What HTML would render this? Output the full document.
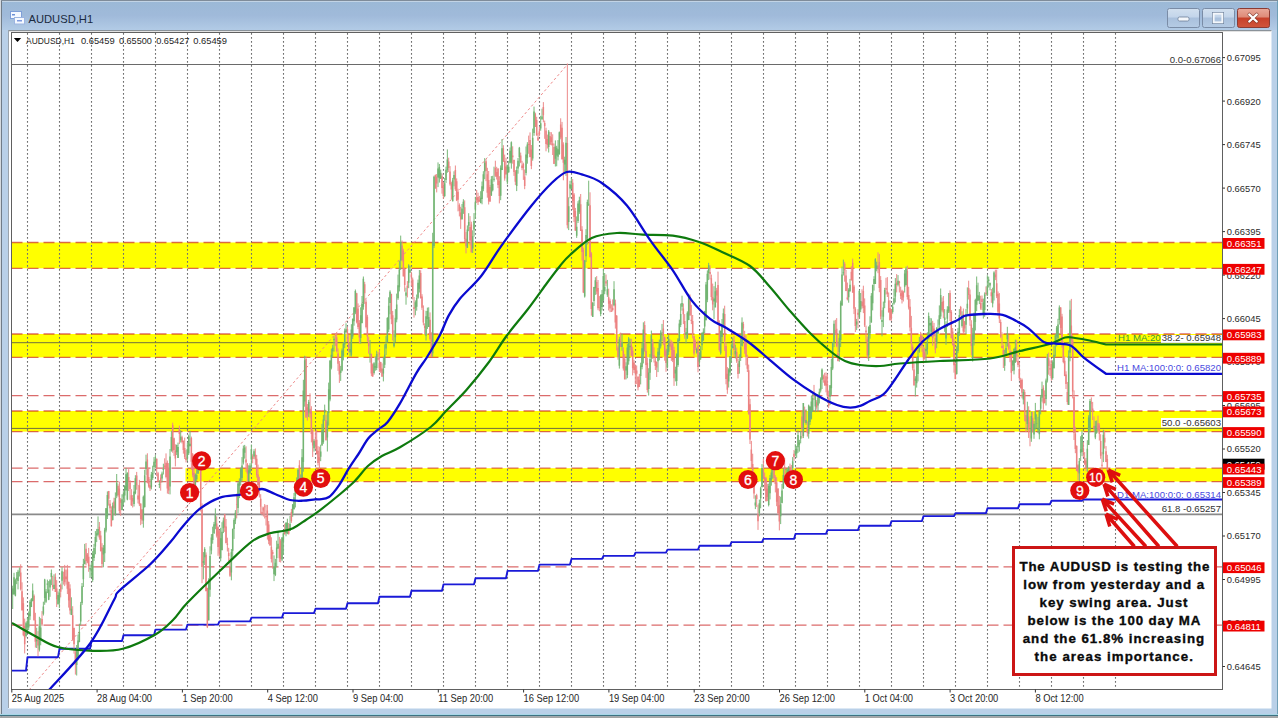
<!DOCTYPE html>
<html><head><meta charset="utf-8"><style>
html,body{margin:0;padding:0;width:1278px;height:718px;overflow:hidden;background:#bcd2ea;}
svg{display:block;font-family:"Liberation Sans", sans-serif;}
</style></head><body>
<svg width="1278" height="718" viewBox="0 0 1278 718">
<defs>
<linearGradient id="tb" x1="0" y1="0" x2="0" y2="1">
<stop offset="0" stop-color="#9bb9d6"/><stop offset="0.5" stop-color="#a0bada"/><stop offset="1" stop-color="#b2cbe6"/>
</linearGradient>
<linearGradient id="btn" x1="0" y1="0" x2="0" y2="1">
<stop offset="0" stop-color="#d2e0ef"/><stop offset="0.45" stop-color="#c3d5ea"/><stop offset="0.5" stop-color="#a9c0dc"/><stop offset="1" stop-color="#b5cbe4"/>
</linearGradient>
<linearGradient id="cls" x1="0" y1="0" x2="0" y2="1">
<stop offset="0" stop-color="#e9a99a"/><stop offset="0.45" stop-color="#de8a78"/><stop offset="0.5" stop-color="#c7402a"/><stop offset="1" stop-color="#d0553c"/>
</linearGradient>
<clipPath id="chart"><rect x="12.0" y="33.0" width="1210.0" height="656.0"/></clipPath>
</defs>

<rect x="0" y="0" width="1278" height="718" fill="#b9d0e8"/>
<rect x="0" y="1" width="1278" height="29" fill="url(#tb)"/>
<rect x="0" y="0" width="1278" height="1" fill="#7f8c99"/>
<rect x="0" y="1" width="1278" height="1" fill="#c2d4e5"/>
<rect x="0" y="0" width="1" height="718" fill="#d5dadf"/>
<rect x="1" y="1" width="1" height="716" fill="#707c88"/>
<rect x="1277" y="1" width="1" height="716" fill="#6f9fb6"/>
<rect x="0" y="714" width="1278" height="1" fill="#a6d6e6"/>
<rect x="0" y="715" width="1278" height="1.2" fill="#3d7282"/>
<rect x="0" y="716.2" width="1278" height="1.8" fill="#a3a3a3"/>
<text x="28.5" y="23" font-size="11.2" fill="#1b2a40">AUDUSD,H1</text>
<rect x="10.5" y="11.5" width="11" height="7" fill="#f4f8ff" stroke="#7f9fd8" stroke-width="1"/>
<rect x="14.5" y="17.5" width="10" height="6.5" fill="#f6f9ff" stroke="#9db5e0" stroke-width="1"/>
<rect x="12" y="14" width="3" height="1.5" fill="#6b8fd6"/><rect x="17" y="20" width="5" height="1.5" fill="#7f9be0"/>
<rect x="1167.5" y="8.5" width="32" height="19" rx="2" fill="url(#btn)" stroke="#7a8ca6" stroke-width="1"/>
<rect x="1178" y="17" width="11" height="4" rx="1.5" fill="#f4f7fb" stroke="#6d7f98" stroke-width="0.8"/>
<rect x="1202.5" y="8.5" width="32" height="19" rx="2" fill="url(#btn)" stroke="#7a8ca6" stroke-width="1"/>
<rect x="1213.5" y="13.5" width="9" height="9" fill="none" stroke="#f4f7fb" stroke-width="2.2"/>
<rect x="1212.3" y="12.3" width="11.4" height="11.4" fill="none" stroke="#6d7f98" stroke-width="0.6"/>
<rect x="1237.5" y="8.5" width="32" height="19" rx="2" fill="url(#cls)" stroke="#8a3b34" stroke-width="1"/>
<path d="M1249.3,14.5 L1256.7,21.5 M1256.7,14.5 L1249.3,21.5" stroke="#6a2a20" stroke-width="3.6" stroke-linecap="round" stroke-opacity="0.7"/>
<path d="M1249.3,14.5 L1256.7,21.5 M1256.7,14.5 L1249.3,21.5" stroke="#ffffff" stroke-width="2.4" stroke-linecap="round"/>
<rect x="8" y="30" width="1263.5" height="678.5" fill="#ffffff"/>
<rect x="8" y="30" width="1263.5" height="1" fill="#8a9299"/>
<rect x="8" y="31" width="1263.5" height="1" fill="#e2e2e2"/>
<rect x="8" y="30" width="1" height="678" fill="#9aa3ac"/>
<g clip-path="url(#chart)">
<rect x="12" y="242.5" width="1210.5" height="25.8" fill="#ffff00"/>
<rect x="12" y="334.0" width="1210.5" height="23.4" fill="#ffff00"/>
<rect x="12" y="411.0" width="1210.5" height="20.6" fill="#ffff00"/>
<rect x="185.5" y="468.2" width="1037.0" height="13.4" fill="#ffff00"/>
<rect x="1161" y="335.0" width="61" height="8" fill="#ffffff"/>
<rect x="1161" y="418.0" width="61" height="9.5" fill="#ffffff"/>
<path d="M27.5,33V689.5 M59.5,33V689.5 M91.5,33V689.5 M123.5,33V689.5 M155.5,33V689.5 M187.5,33V689.5 M219.5,33V689.5 M251.5,33V689.5 M283.5,33V689.5 M315.5,33V689.5 M347.5,33V689.5 M379.5,33V689.5 M411.5,33V689.5 M443.5,33V689.5 M475.5,33V689.5 M507.5,33V689.5 M539.5,33V689.5 M571.5,33V689.5 M603.5,33V689.5 M635.5,33V689.5 M667.5,33V689.5 M699.5,33V689.5 M731.5,33V689.5 M763.5,33V689.5 M795.5,33V689.5 M827.5,33V689.5 M859.5,33V689.5 M891.5,33V689.5 M923.5,33V689.5 M955.5,33V689.5 M987.5,33V689.5 M1019.5,33V689.5 M1051.5,33V689.5 M1083.5,33V689.5 M1115.5,33V689.5" stroke="#707070" stroke-width="1.1" stroke-dasharray="1.7 2.3"/>
<line x1="11.5" y1="64.5" x2="1222.5" y2="64.5" stroke="#6a6a6a" stroke-width="1"/>
<line x1="11.5" y1="342.7" x2="1222.5" y2="342.7" stroke="#6f6f40" stroke-width="1"/>
<line x1="11.5" y1="428.4" x2="1222.5" y2="428.4" stroke="#6f6f40" stroke-width="1"/>
<line x1="11.5" y1="514.4" x2="1222.5" y2="514.4" stroke="#8a8a8a" stroke-width="1.6"/>
<path d="M11.5,242.5H1222.5 M11.5,268.4H1222.5 M11.5,334.0H1222.5 M11.5,357.3H1222.5 M11.5,395.6H1222.5 M11.5,411.0H1222.5 M11.5,431.6H1222.5 M11.5,468.2H1222.5 M11.5,481.6H1222.5 M11.5,566.8H1222.5 M11.5,625.2H1222.5" stroke="#c81c1c" stroke-opacity="0.65" stroke-width="1.3" stroke-dasharray="11 5"/>
<line x1="29" y1="690" x2="567.4" y2="64.5" stroke="#ee8888" stroke-width="1" stroke-dasharray="2.5 2.5"/>
<polyline points="12.0,670.6 26.0,670.6 27.5,657.2 58.0,657.2 59.5,648.8 90.0,648.8 91.5,641.0 122.0,641.0 123.5,635.3 154.0,635.3 155.5,629.6 186.0,629.6 187.5,624.6 218.0,624.6 219.5,621.4 250.0,621.4 251.5,617.6 282.0,617.6 283.5,613.1 314.0,613.1 315.5,608.8 346.0,608.8 347.5,603.3 378.0,603.3 379.5,596.8 410.0,596.8 411.5,590.8 442.0,590.8 443.5,584.4 474.0,584.4 475.5,578.2 506.0,578.2 507.5,570.9 538.0,570.9 539.5,564.6 570.0,564.6 571.5,558.9 602.0,558.9 603.5,555.9 634.0,555.9 635.5,552.6 666.0,552.6 667.5,549.6 698.0,549.6 699.5,545.8 730.0,545.8 731.5,542.1 762.0,542.1 763.5,538.9 794.0,538.9 795.5,533.9 826.0,533.9 827.5,530.1 858.0,530.1 859.5,525.8 890.0,525.8 891.5,521.1 922.0,521.1 923.5,516.1 954.0,516.1 955.5,513.1 986.0,513.1 987.5,508.3 1018.0,508.3 1019.5,504.2 1050.0,504.2 1051.5,500.7 1082.0,500.7 1083.5,499.5 1222.0,499.5" fill="none" stroke="#1a1ad8" stroke-width="1.9" stroke-linejoin="round"/>
<path d="M20.70,564.3V590.5 M22.03,582.3V610.7 M23.37,597.4V636.3 M24.70,618.6V653.4 M34.03,594.4V620.0 M35.37,612.8V647.6 M38.03,631.2V656.2 M42.03,611.1V626.1 M52.70,575.8V590.7 M55.37,573.4V592.0 M56.70,580.1V607.0 M60.70,583.6V597.4 M63.37,571.7V584.6 M64.70,564.9V586.1 M66.03,570.1V584.6 M67.37,564.9V594.1 M68.70,581.5V607.6 M70.03,584.3V614.4 M72.70,606.2V640.8 M74.03,627.6V653.6 M75.37,649.0V674.6 M86.03,543.0V565.4 M87.36,553.0V563.3 M88.70,547.9V571.8 M99.36,522.0V539.8 M100.70,530.8V551.3 M102.03,543.2V567.3 M108.70,490.9V505.6 M110.03,500.0V512.6 M111.36,506.4V526.5 M114.03,497.7V515.5 M118.03,484.3V496.8 M119.36,481.6V513.7 M120.70,498.1V515.8 M128.70,469.2V491.0 M130.03,480.2V499.8 M131.36,489.1V506.0 M132.70,495.1V507.5 M136.70,471.9V489.7 M138.03,484.9V503.4 M139.36,479.9V506.1 M140.70,503.5V525.2 M142.03,509.1V524.0 M147.36,453.3V483.4 M148.70,468.4V487.7 M150.03,479.0V491.0 M156.70,458.5V476.2 M158.03,471.8V482.0 M160.70,474.4V490.7 M164.70,458.3V469.2 M166.03,453.4V478.4 M167.36,460.5V493.6 M168.70,463.1V494.1 M172.70,422.7V452.8 M174.03,437.6V455.9 M175.36,444.3V466.4 M179.36,425.6V444.1 M182.03,435.7V443.4 M183.36,440.6V453.7 M184.70,437.6V459.0 M186.03,450.1V462.4 M191.36,436.6V470.0 M192.70,453.0V477.3 M194.03,463.7V489.5 M200.70,460.7V511.5 M202.03,503.3V583.2 M206.03,552.4V591.5 M207.36,587.7V628.1 M216.69,516.4V537.5 M218.03,526.3V555.8 M219.36,529.7V557.1 M224.69,513.8V531.9 M226.03,519.0V543.5 M227.36,537.7V551.5 M228.69,547.8V561.0 M230.03,558.3V576.9 M236.69,493.6V518.4 M246.03,446.3V471.9 M247.36,463.0V484.7 M252.69,454.3V463.3 M255.36,448.5V464.9 M256.69,454.9V477.6 M258.03,464.6V491.6 M259.36,476.8V497.5 M260.69,494.2V514.0 M262.03,506.6V515.4 M263.36,506.8V516.5 M264.69,504.1V518.5 M266.03,504.9V525.5 M267.36,504.9V539.6 M268.69,521.0V544.2 M270.03,531.7V546.1 M271.36,537.3V562.5 M272.69,549.8V568.7 M279.36,536.9V562.1 M280.69,538.9V562.5 M284.69,523.7V534.0 M288.69,523.0V534.6 M291.36,508.9V522.9 M299.36,460.2V482.7 M306.03,356.1V417.3 M307.36,404.0V420.6 M310.03,393.3V418.3 M311.36,406.2V442.4 M312.69,429.4V457.0 M315.36,431.2V449.5 M316.69,430.1V454.6 M318.03,446.2V465.5 M319.36,446.7V469.1 M326.03,414.8V440.5 M335.36,333.8V346.1 M336.69,334.0V352.3 M338.03,348.4V370.9 M339.36,361.0V382.9 M347.36,326.8V342.0 M348.69,334.6V352.6 M356.69,292.8V323.4 M358.02,303.4V329.1 M359.36,320.1V343.6 M364.69,281.8V303.9 M366.02,299.3V328.4 M367.36,314.8V341.7 M368.69,336.6V353.7 M371.36,353.5V376.2 M372.69,363.4V376.8 M378.02,352.0V360.7 M379.36,349.3V372.0 M380.69,361.8V372.9 M382.02,363.4V377.0 M391.36,293.7V324.2 M392.69,310.9V340.6 M402.02,240.5V261.3 M403.36,248.7V276.2 M404.69,268.5V291.6 M407.36,281.1V297.4 M411.36,271.8V286.1 M412.69,277.5V299.4 M414.02,297.0V317.6 M420.69,270.2V298.7 M422.02,294.2V309.9 M423.36,305.4V325.4 M424.69,323.3V335.1 M430.02,312.4V340.6 M431.36,332.2V357.1 M435.36,174.5V188.6 M436.69,174.0V192.4 M442.02,173.5V193.7 M443.36,182.0V198.8 M448.69,157.7V172.0 M450.02,166.1V185.7 M451.36,181.7V199.1 M455.36,165.5V190.9 M456.69,178.4V201.1 M458.02,188.7V211.4 M459.36,203.4V216.4 M460.69,206.8V228.9 M464.69,200.4V241.9 M466.02,232.1V253.4 M470.02,216.1V245.3 M471.36,221.7V252.7 M476.69,190.0V203.1 M478.02,192.7V205.0 M479.35,195.9V202.0 M486.02,159.2V181.2 M487.35,167.8V197.7 M488.69,171.0V204.5 M490.02,185.0V201.3 M495.35,160.7V176.9 M496.69,166.8V179.5 M498.02,168.0V188.1 M499.35,176.2V203.4 M503.35,145.2V161.7 M504.69,154.6V180.7 M506.02,157.8V174.2 M512.69,146.3V163.7 M514.02,159.6V175.9 M515.35,170.1V185.1 M520.69,152.6V163.2 M522.02,160.8V170.2 M523.35,162.7V179.9 M524.69,169.5V189.2 M528.69,135.6V153.8 M530.02,132.4V157.4 M531.35,145.0V169.2 M535.35,112.7V126.7 M536.69,116.8V135.5 M538.02,133.4V140.9 M539.35,126.9V136.3 M543.35,102.1V122.3 M544.69,120.6V138.8 M546.02,127.7V151.3 M547.35,134.6V148.5 M550.02,132.0V145.0 M551.35,132.2V145.4 M552.69,134.3V155.0 M554.02,143.5V163.6 M560.69,118.3V139.3 M562.02,121.9V159.8 M563.35,142.3V180.3 M567.35,63.5V228.4 M572.69,179.1V209.9 M574.02,193.0V222.0 M575.35,207.9V230.6 M580.69,194.0V231.0 M582.02,226.2V260.6 M583.35,247.7V293.1 M590.02,192.3V257.6 M591.35,252.1V315.7 M596.69,276.1V294.4 M598.02,280.0V310.2 M599.35,296.1V311.3 M606.02,274.5V286.3 M608.69,288.7V310.5 M610.02,298.7V312.2 M611.35,304.3V311.7 M612.69,299.4V311.4 M615.35,299.6V328.6 M616.68,315.0V350.5 M618.02,345.4V359.7 M620.68,332.6V346.7 M623.35,347.3V370.6 M624.68,354.1V379.0 M631.35,338.8V356.1 M632.68,346.8V375.4 M634.02,359.8V373.0 M635.35,364.5V384.6 M636.68,365.5V384.1 M638.02,376.4V390.4 M639.35,373.9V387.0 M644.68,321.2V351.5 M646.02,343.4V377.9 M647.35,357.6V392.6 M652.68,339.0V358.9 M654.02,347.3V362.5 M655.35,356.6V370.0 M656.68,361.4V377.0 M663.35,320.0V345.0 M664.68,336.6V360.7 M666.02,348.5V371.8 M670.02,339.4V347.1 M671.35,340.4V360.9 M672.68,341.7V362.1 M674.02,346.8V385.9 M683.35,303.5V324.1 M684.68,314.1V338.8 M690.02,294.5V315.5 M691.35,304.8V324.1 M692.68,315.0V338.4 M694.02,335.5V355.6 M695.35,339.4V350.1 M698.02,340.5V372.3 M710.02,265.3V279.3 M711.35,274.6V300.4 M712.68,283.6V310.3 M716.68,287.9V302.6 M718.02,271.6V324.6 M719.35,320.3V351.6 M724.68,305.7V351.0 M726.02,342.4V384.3 M727.35,367.1V393.8 M734.02,335.8V356.3 M736.68,347.6V362.9 M738.02,358.8V378.5 M743.35,321.8V340.2 M744.68,330.8V353.8 M746.01,335.1V365.3 M747.35,354.8V372.0 M748.68,364.6V414.2 M750.01,398.8V444.0 M751.35,440.9V468.1 M752.68,453.7V487.1 M754.01,474.8V498.7 M756.68,493.8V507.1 M758.01,504.7V529.9 M763.35,459.0V479.1 M764.68,472.5V490.6 M766.01,476.8V501.3 M767.35,483.7V501.1 M774.01,456.1V481.0 M775.35,475.2V492.4 M776.68,477.2V506.2 M778.01,488.0V514.9 M779.35,495.9V530.4 M784.68,457.9V476.5 M790.01,463.6V482.9 M791.35,465.0V474.7 M794.01,450.0V460.9 M802.01,410.0V438.2 M804.68,406.6V422.9 M807.35,421.4V436.6 M814.01,384.9V400.0 M816.68,400.1V409.7 M823.35,374.6V382.7 M824.68,372.8V385.9 M826.01,372.4V392.3 M827.35,373.9V397.0 M828.68,390.6V408.1 M835.35,319.8V334.9 M836.68,318.1V347.2 M838.01,341.7V361.4 M844.68,261.8V281.7 M846.01,269.9V291.2 M847.35,282.6V300.4 M851.35,266.2V280.2 M852.68,258.6V292.4 M854.01,284.9V314.1 M855.35,307.2V332.0 M858.01,309.2V328.2 M862.01,289.3V308.6 M863.35,285.7V313.1 M864.68,298.4V327.0 M866.01,325.6V341.7 M867.35,336.5V358.5 M878.01,252.3V273.2 M879.35,253.9V292.2 M880.68,276.1V319.4 M886.01,277.8V294.6 M887.34,277.1V297.0 M888.68,292.5V312.2 M890.01,300.3V320.6 M891.34,309.0V320.8 M896.68,274.1V292.4 M899.34,280.8V292.5 M900.68,286.7V299.1 M902.01,289.7V303.5 M903.34,290.8V301.5 M907.34,265.7V299.6 M908.68,286.8V309.5 M910.01,299.1V331.3 M911.34,315.9V350.2 M912.68,344.2V370.4 M914.01,363.7V386.0 M920.68,331.9V348.1 M922.01,333.0V351.8 M923.34,346.7V363.5 M924.68,347.6V359.6 M932.68,320.8V345.8 M934.01,322.9V336.4 M935.34,331.9V353.3 M942.01,297.5V311.6 M943.34,296.0V318.3 M950.01,290.3V321.0 M951.34,310.1V338.6 M952.68,328.0V345.5 M954.01,338.8V372.7 M955.34,363.4V379.3 M960.68,305.9V315.8 M963.34,308.5V334.0 M964.68,320.9V332.5 M968.68,280.7V299.5 M970.01,289.5V325.8 M971.34,320.2V355.4 M980.68,295.7V309.8 M982.01,295.5V310.0 M986.01,286.4V295.8 M991.34,289.0V302.8 M995.34,269.7V280.1 M996.68,269.7V298.1 M998.01,291.4V315.8 M999.34,293.1V323.0 M1000.68,319.4V338.1 M1002.01,332.3V348.0 M1003.34,344.5V368.0 M1008.68,334.9V350.4 M1010.01,344.9V362.2 M1011.34,350.7V381.0 M1016.67,339.8V361.8 M1018.01,355.0V367.2 M1019.34,362.3V380.7 M1020.67,377.9V388.4 M1022.01,378.5V398.3 M1024.67,389.7V421.3 M1026.01,411.6V432.1 M1028.67,406.3V438.0 M1030.01,421.9V446.3 M1032.67,411.4V432.1 M1043.34,385.2V409.8 M1044.67,390.4V403.5 M1048.67,352.6V374.7 M1050.01,360.5V376.1 M1051.34,359.6V380.7 M1060.67,307.1V333.1 M1062.01,313.8V347.7 M1063.34,341.5V363.3 M1064.67,356.3V376.2 M1066.01,371.3V389.0 M1067.34,382.0V404.7 M1071.34,298.9V345.5 M1072.67,335.3V398.4 M1074.01,390.4V440.0 M1075.34,426.8V453.2 M1076.67,445.3V471.1 M1078.01,464.2V480.4 M1083.34,442.2V457.3 M1084.67,452.1V465.1 M1086.01,457.9V471.2 M1091.34,397.4V411.2 M1092.67,401.9V420.0 M1094.01,416.4V431.6 M1098.01,415.6V432.7 M1099.34,423.2V440.6 M1100.67,434.2V458.8 M1102.01,451.9V471.0 M1104.67,430.6V448.6 M1106.01,446.1V462.1 M1107.34,454.8V471.2" stroke="#ec8a8a" stroke-width="1" fill="none"/>
<path d="M12.70,585.7V609.0 M14.03,572.8V595.0 M15.37,578.7V596.4 M16.70,572.1V584.2 M18.03,569.8V589.4 M19.37,567.4V576.5 M26.03,621.8V637.4 M27.37,617.9V632.2 M28.70,611.4V630.1 M30.03,599.9V619.9 M31.37,598.1V607.1 M32.70,583.5V601.4 M36.70,627.8V648.0 M39.37,616.8V651.5 M40.70,618.2V645.3 M43.37,601.7V615.5 M44.70,578.8V604.8 M46.03,589.0V602.9 M47.37,579.6V593.1 M48.70,581.1V600.2 M50.03,579.1V596.8 M51.37,569.5V585.1 M54.03,574.3V589.1 M58.03,591.4V603.9 M59.37,589.1V608.1 M62.03,567.2V589.4 M71.37,597.3V615.1 M76.70,645.0V675.5 M78.03,634.5V660.3 M79.36,623.7V642.3 M80.70,601.9V625.3 M82.03,583.0V605.0 M83.36,558.8V587.0 M84.70,543.9V563.8 M90.03,564.7V578.0 M91.36,562.5V576.9 M92.70,551.1V581.8 M94.03,543.9V560.9 M95.36,531.1V554.3 M96.70,528.9V542.1 M98.03,516.4V536.4 M103.36,545.1V567.3 M104.70,527.8V562.0 M106.03,508.0V532.4 M107.36,491.4V519.0 M112.70,502.6V520.5 M115.36,492.4V515.7 M116.70,474.0V498.2 M122.03,494.3V510.3 M123.36,491.2V505.1 M124.70,485.1V502.4 M126.03,467.9V490.8 M127.36,472.4V500.3 M134.03,485.0V506.5 M135.36,475.2V494.3 M143.36,495.5V527.7 M144.70,469.8V507.6 M146.03,454.7V474.9 M151.36,471.9V489.4 M152.70,465.7V479.9 M154.03,457.1V473.5 M155.36,455.1V468.1 M159.36,480.2V488.1 M162.03,471.6V482.3 M163.36,463.7V474.5 M170.03,449.0V494.4 M171.36,430.8V451.7 M176.70,444.6V455.0 M178.03,442.6V458.0 M180.70,430.3V442.5 M187.36,442.9V461.1 M188.70,434.6V455.0 M190.03,430.8V446.2 M195.36,473.5V486.0 M196.70,468.0V481.0 M198.03,467.8V474.1 M199.36,463.3V470.7 M203.36,552.1V579.3 M204.70,547.2V565.0 M208.70,578.2V620.1 M210.03,546.3V596.8 M211.36,534.1V554.3 M212.69,526.7V543.7 M214.03,521.9V533.7 M215.36,508.4V529.2 M220.69,527.8V561.4 M222.03,522.2V550.5 M223.36,517.5V533.1 M231.36,549.0V580.3 M232.69,528.5V557.0 M234.03,518.3V538.9 M235.36,510.1V524.1 M238.03,481.5V513.0 M239.36,478.4V498.1 M240.69,467.6V485.5 M242.03,457.1V480.8 M243.36,445.5V464.5 M244.69,444.9V458.6 M248.69,465.3V483.6 M250.03,463.2V474.1 M251.36,444.5V468.2 M254.03,449.2V458.8 M274.03,555.4V581.1 M275.36,558.8V576.1 M276.69,540.7V567.3 M278.03,531.3V549.0 M282.03,537.1V561.0 M283.36,532.2V554.6 M286.03,522.0V536.3 M287.36,518.7V534.2 M290.03,515.9V531.0 M292.69,504.0V516.8 M294.03,493.0V509.7 M295.36,486.3V507.5 M296.69,477.4V490.3 M298.03,468.4V487.7 M300.69,474.4V482.6 M302.03,449.0V494.5 M303.36,379.8V471.7 M304.69,355.8V406.7 M308.69,399.9V417.0 M314.03,439.0V451.6 M320.69,444.7V461.2 M322.03,423.9V445.9 M323.36,414.9V443.8 M324.69,404.6V420.7 M327.36,411.1V451.5 M328.69,382.6V425.6 M330.03,360.0V401.3 M331.36,348.6V369.4 M332.69,344.8V357.2 M334.03,336.4V351.6 M340.69,365.9V380.9 M342.03,348.4V371.4 M343.36,342.1V360.4 M344.69,328.5V348.1 M346.02,323.3V332.7 M350.02,342.3V356.4 M351.36,324.2V356.6 M352.69,318.6V338.9 M354.02,307.0V325.7 M355.36,289.5V314.2 M360.69,307.3V343.6 M362.02,296.0V323.0 M363.36,276.5V309.7 M370.02,340.0V362.6 M374.02,362.2V374.6 M375.36,356.3V370.7 M376.69,350.7V370.2 M383.36,357.0V381.4 M384.69,344.3V368.1 M386.02,336.1V355.0 M387.36,317.2V342.6 M388.69,297.3V332.1 M390.02,290.3V314.3 M394.02,330.3V347.5 M395.36,309.2V342.2 M396.69,293.6V322.3 M398.02,274.6V299.9 M399.36,260.7V291.4 M400.69,235.6V270.0 M406.02,287.7V304.7 M408.69,264.2V288.2 M410.02,265.8V272.5 M415.36,300.4V315.3 M416.69,294.5V310.7 M418.02,279.6V298.8 M419.36,270.0V292.5 M426.02,310.8V340.5 M427.36,307.6V328.9 M428.69,307.3V326.6 M432.69,232.8V356.8 M434.02,175.7V248.0 M438.02,162.4V187.1 M439.36,164.0V182.6 M440.69,169.6V179.0 M444.69,178.0V197.2 M446.02,166.6V182.9 M447.36,149.4V172.7 M452.69,177.9V201.4 M454.02,171.3V186.3 M462.02,204.0V219.8 M463.36,199.2V213.9 M467.36,225.4V247.9 M468.69,213.2V231.2 M472.69,230.3V253.0 M474.02,213.1V236.7 M475.36,196.9V218.8 M480.69,191.2V203.3 M482.02,181.5V204.3 M483.35,171.2V191.2 M484.69,158.1V179.2 M491.35,176.1V195.9 M492.69,175.8V191.4 M494.02,166.7V181.7 M500.69,165.4V200.2 M502.02,139.0V170.1 M507.35,164.7V184.3 M508.69,160.9V172.8 M510.02,147.4V163.5 M511.35,141.4V168.7 M516.69,166.5V191.1 M518.02,158.0V173.7 M519.35,146.9V166.5 M526.02,146.5V175.4 M527.35,142.2V163.7 M532.69,128.6V160.7 M534.02,106.6V135.8 M540.69,115.8V130.7 M542.02,108.7V119.4 M548.69,130.0V152.5 M555.35,140.4V166.5 M556.69,145.8V166.3 M558.02,140.1V160.4 M559.35,131.5V154.8 M564.69,156.7V174.2 M566.02,137.0V175.9 M568.69,197.3V230.1 M570.02,180.8V198.2 M571.35,178.0V188.8 M576.69,216.4V237.9 M578.02,201.2V223.0 M579.35,196.7V213.9 M584.69,259.9V297.6 M586.02,229.2V262.1 M587.35,199.6V244.5 M588.69,180.7V206.0 M592.69,302.0V316.7 M594.02,286.8V306.0 M595.35,277.2V294.9 M600.69,294.3V316.2 M602.02,289.9V310.4 M603.35,269.1V300.6 M604.69,273.0V294.2 M607.35,279.9V296.9 M614.02,281.2V306.3 M619.35,336.8V368.6 M622.02,333.7V350.8 M626.02,362.3V379.4 M627.35,343.8V378.2 M628.68,337.0V364.7 M630.02,338.6V350.1 M640.68,362.7V384.4 M642.02,342.4V369.3 M643.35,322.3V363.4 M648.68,368.2V395.6 M650.02,354.1V379.9 M651.35,330.6V362.2 M658.02,347.9V372.1 M659.35,339.5V360.3 M660.68,330.3V348.5 M662.02,323.9V341.1 M667.35,345.8V368.5 M668.68,335.1V355.1 M675.35,366.7V381.4 M676.68,353.3V385.8 M678.02,338.0V366.8 M679.35,319.7V341.5 M680.68,303.5V327.1 M682.02,295.7V310.6 M686.02,327.9V343.4 M687.35,311.3V339.0 M688.68,293.8V320.2 M696.68,347.6V353.6 M699.35,351.9V365.1 M700.68,346.0V359.9 M702.02,332.3V350.2 M703.35,328.3V340.7 M704.68,310.9V333.0 M706.02,281.9V320.6 M707.35,270.4V302.2 M708.68,262.8V280.1 M714.02,286.2V319.1 M715.35,281.7V307.1 M720.68,330.7V354.7 M722.02,319.0V341.7 M723.35,308.5V325.7 M728.68,368.2V387.5 M730.02,356.1V375.8 M731.35,343.5V362.2 M732.68,337.6V348.5 M735.35,344.6V358.5 M739.35,354.3V373.7 M740.68,337.1V361.0 M742.02,317.4V346.6 M755.35,495.3V509.1 M759.35,499.6V516.3 M760.68,486.7V508.3 M762.01,464.1V487.6 M768.68,483.6V506.4 M770.01,475.1V499.4 M771.35,469.0V485.7 M772.68,455.0V478.8 M780.68,496.7V524.1 M782.01,484.0V502.7 M783.35,468.4V489.0 M786.01,468.9V476.3 M787.35,467.8V482.5 M788.68,466.1V477.3 M792.68,457.1V472.9 M795.35,444.2V456.4 M796.68,445.9V457.8 M798.01,430.5V452.8 M799.35,439.8V451.6 M800.68,430.9V443.3 M803.35,403.0V438.1 M806.01,409.4V424.8 M808.68,404.6V438.6 M810.01,406.0V424.9 M811.35,395.9V419.5 M812.68,393.6V411.6 M815.35,393.7V412.2 M818.01,394.2V411.9 M819.35,388.6V403.5 M820.68,377.4V392.5 M822.01,368.4V389.0 M830.01,385.2V405.1 M831.35,358.7V394.9 M832.68,341.9V370.1 M834.01,320.5V347.1 M839.35,330.4V361.7 M840.68,300.6V347.0 M842.01,266.5V306.0 M843.35,259.6V275.5 M848.68,288.2V302.7 M850.01,278.9V291.2 M856.68,318.9V330.1 M859.35,290.2V318.8 M860.68,293.0V312.2 M868.68,326.3V361.0 M870.01,316.3V338.7 M871.35,293.1V322.6 M872.68,284.6V310.4 M874.01,276.2V290.6 M875.35,258.2V283.6 M876.68,261.7V271.3 M882.01,310.2V336.3 M883.34,301.6V327.1 M884.68,287.8V308.2 M892.68,303.1V313.7 M894.01,288.9V304.7 M895.34,278.1V302.5 M898.01,275.1V286.4 M904.68,270.0V292.6 M906.01,266.7V285.6 M915.34,376.2V396.4 M916.68,357.1V387.6 M918.01,350.1V381.4 M919.34,337.0V352.8 M926.01,343.0V361.8 M927.34,332.2V354.6 M928.68,312.5V339.5 M930.01,317.9V333.7 M931.34,318.3V337.0 M936.68,327.1V348.2 M938.01,319.5V333.7 M939.34,305.4V328.4 M940.68,288.5V319.0 M944.68,309.1V331.8 M946.01,321.3V344.8 M947.34,306.2V327.0 M948.68,293.0V313.0 M956.68,346.2V374.6 M958.01,327.9V353.2 M959.34,309.1V336.0 M962.01,311.3V327.6 M966.01,308.9V333.9 M967.34,287.4V313.9 M972.68,327.8V361.6 M974.01,312.6V345.5 M975.34,298.7V330.5 M976.68,276.5V311.1 M978.01,282.7V300.5 M979.34,291.9V304.1 M983.34,298.6V318.6 M984.68,292.4V316.8 M987.34,275.2V296.1 M988.68,276.6V287.5 M990.01,282.5V290.3 M992.68,287.7V307.4 M994.01,271.3V300.5 M1004.68,349.7V370.8 M1006.01,343.0V355.3 M1007.34,326.8V346.6 M1012.67,360.5V371.1 M1014.01,348.6V374.4 M1015.34,339.7V362.8 M1023.34,389.1V404.4 M1027.34,401.7V430.4 M1031.34,411.6V441.8 M1034.01,420.9V438.8 M1035.34,402.9V429.6 M1036.67,414.2V428.4 M1038.01,416.8V433.1 M1039.34,409.8V439.3 M1040.67,394.9V414.4 M1042.01,381.6V401.6 M1046.01,378.6V405.5 M1047.34,353.8V382.5 M1052.67,360.3V379.7 M1054.01,345.7V368.4 M1055.34,334.1V356.6 M1056.67,326.0V346.4 M1058.01,318.8V339.1 M1059.34,305.4V324.6 M1068.67,350.3V404.8 M1070.01,300.5V361.3 M1079.34,458.0V483.9 M1080.67,436.3V461.0 M1082.01,430.4V456.1 M1087.34,440.2V472.2 M1088.67,415.2V444.9 M1090.01,399.0V432.3 M1095.34,420.9V439.2 M1096.67,420.5V433.8 M1103.34,429.8V462.1" stroke="#78b878" stroke-width="1" fill="none"/>
<path d="M20.70,572.4V589.2 M22.03,591.2V610.3 M23.37,603.2V635.3 M24.70,625.7V644.2 M34.03,595.7V620.5 M35.37,620.2V641.8 M38.03,636.3V645.5 M42.03,619.0V624.5 M52.70,585.0V587.0 M55.37,576.7V592.1 M56.70,588.6V599.2 M60.70,585.1V591.8 M63.37,577.4V578.6 M64.70,569.2V582.3 M66.03,576.4V579.2 M67.37,569.2V588.8 M68.70,582.0V600.6 M70.03,588.5V610.5 M72.70,615.2V639.6 M74.03,627.9V644.3 M75.37,652.4V664.6 M86.03,548.7V560.9 M87.36,554.4V562.6 M88.70,556.8V566.2 M99.36,526.7V537.5 M100.70,535.4V551.3 M102.03,547.2V564.0 M108.70,491.0V498.7 M110.03,503.8V508.2 M111.36,510.1V526.2 M114.03,501.6V508.3 M118.03,485.9V495.2 M119.36,488.6V511.1 M120.70,499.7V502.7 M128.70,477.1V480.8 M130.03,482.5V489.1 M131.36,495.2V505.3 M132.70,498.1V501.4 M136.70,475.5V485.3 M138.03,495.4V499.4 M139.36,485.2V504.3 M140.70,503.6V519.0 M142.03,509.5V520.4 M147.36,459.6V482.8 M148.70,476.9V486.4 M150.03,485.3V488.5 M156.70,458.7V469.1 M158.03,473.2V481.4 M160.70,477.5V482.8 M164.70,465.4V466.9 M166.03,462.8V477.1 M167.36,462.8V488.6 M168.70,467.5V490.6 M172.70,425.0V450.7 M174.03,438.3V450.1 M175.36,450.6V458.5 M179.36,429.3V434.0 M182.03,437.3V442.0 M183.36,440.7V450.1 M184.70,448.0V457.0 M186.03,457.5V460.0 M191.36,437.9V461.7 M192.70,454.3V475.3 M194.03,472.8V486.4 M200.70,460.8V507.0 M202.03,509.4V567.1 M206.03,554.7V591.0 M207.36,588.0V627.2 M216.69,523.4V535.7 M218.03,527.3V547.0 M219.36,531.3V553.5 M224.69,513.9V527.6 M226.03,526.6V543.1 M227.36,543.6V545.1 M228.69,553.0V555.9 M230.03,566.9V575.8 M236.69,503.9V504.5 M246.03,459.4V462.5 M247.36,464.2V473.5 M252.69,456.2V459.0 M255.36,454.6V459.5 M256.69,458.7V475.3 M258.03,474.5V485.0 M259.36,481.2V490.7 M260.69,498.7V506.7 M262.03,511.7V514.0 M263.36,507.9V510.4 M264.69,506.5V507.3 M266.03,516.1V517.3 M267.36,510.5V532.9 M268.69,524.5V540.9 M270.03,535.3V545.2 M271.36,546.7V558.9 M272.69,551.9V554.1 M279.36,546.2V558.3 M280.69,540.4V559.3 M284.69,529.9V534.5 M288.69,528.2V533.7 M291.36,512.1V521.0 M299.36,465.2V481.1 M306.03,358.9V417.7 M307.36,407.2V415.5 M310.03,408.7V413.8 M311.36,411.3V433.9 M312.69,430.2V445.5 M315.36,440.4V445.1 M316.69,439.7V454.1 M318.03,450.7V463.0 M319.36,457.2V460.5 M326.03,420.0V440.3 M335.36,335.4V336.0 M336.69,337.2V350.9 M338.03,353.4V363.7 M339.36,363.7V374.4 M347.36,328.9V334.0 M348.69,342.5V349.9 M356.69,293.2V322.2 M358.02,308.4V327.1 M359.36,323.1V337.6 M364.69,284.3V293.3 M366.02,301.7V326.9 M367.36,316.7V336.5 M368.69,341.7V346.3 M371.36,354.0V373.6 M372.69,364.6V376.5 M378.02,357.8V359.8 M379.36,362.8V368.6 M380.69,362.0V371.5 M382.02,368.4V376.6 M391.36,294.0V319.3 M392.69,315.3V335.0 M402.02,245.6V260.3 M403.36,250.8V276.4 M404.69,268.6V284.9 M407.36,285.8V287.8 M411.36,274.6V277.2 M412.69,279.4V296.8 M414.02,307.2V309.0 M420.69,273.1V298.1 M422.02,296.4V307.7 M423.36,309.8V322.4 M424.69,326.1V327.9 M430.02,319.7V338.9 M431.36,339.4V357.0 M435.36,175.3V188.6 M436.69,176.7V183.4 M442.02,176.3V188.0 M443.36,186.3V196.1 M448.69,161.4V167.9 M450.02,171.5V184.2 M451.36,183.4V189.6 M455.36,170.1V189.3 M456.69,181.3V200.6 M458.02,192.1V199.7 M459.36,205.0V210.8 M460.69,212.4V219.6 M464.69,207.2V239.1 M466.02,238.7V246.3 M470.02,227.1V240.4 M471.36,224.4V252.2 M476.69,197.6V200.3 M478.02,197.0V202.3 M479.35,199.8V201.3 M486.02,161.2V171.1 M487.35,174.2V192.8 M488.69,179.9V201.6 M490.02,187.1V201.8 M495.35,167.9V175.8 M496.69,172.0V176.8 M498.02,168.7V185.0 M499.35,181.1V195.9 M503.35,148.2V161.8 M504.69,160.9V178.4 M506.02,166.6V174.5 M512.69,155.6V157.3 M514.02,159.9V172.0 M515.35,171.6V181.8 M520.69,155.5V162.3 M522.02,165.5V168.0 M523.35,164.0V168.3 M524.69,176.5V186.0 M528.69,144.0V145.1 M530.02,140.0V156.9 M531.35,149.6V166.1 M535.35,114.3V126.9 M536.69,120.0V135.4 M538.02,137.5V140.5 M539.35,131.2V134.1 M543.35,107.0V115.2 M544.69,123.1V126.2 M546.02,130.6V144.0 M547.35,139.1V145.0 M550.02,136.0V144.5 M551.35,137.2V142.1 M552.69,143.6V145.3 M554.02,147.0V163.9 M560.69,124.6V137.5 M562.02,127.7V159.1 M563.35,144.6V162.7 M567.35,143.0V225.3 M572.69,182.8V200.9 M574.02,194.6V217.1 M575.35,211.1V230.7 M580.69,204.2V231.1 M582.02,229.6V251.9 M583.35,249.7V292.4 M590.02,205.2V257.1 M591.35,253.6V309.0 M596.69,282.0V291.5 M598.02,288.1V308.3 M599.35,306.9V307.5 M606.02,281.2V283.6 M608.69,297.2V303.7 M610.02,300.8V308.4 M611.35,310.8V311.8 M612.69,307.7V310.1 M615.35,303.6V322.5 M616.68,315.7V343.1 M618.02,347.4V357.3 M620.68,341.3V347.1 M623.35,350.8V368.5 M624.68,358.7V379.4 M631.35,344.7V355.8 M632.68,350.7V368.2 M634.02,362.4V370.0 M635.35,366.5V373.4 M636.68,370.4V373.8 M638.02,376.7V387.4 M639.35,379.7V386.7 M644.68,325.0V351.3 M646.02,351.0V365.0 M647.35,362.7V389.9 M652.68,341.7V356.4 M654.02,355.3V357.8 M655.35,360.7V365.9 M656.68,362.0V367.6 M663.35,328.4V336.1 M664.68,337.3V355.8 M666.02,350.4V363.1 M670.02,342.9V346.2 M671.35,345.6V350.0 M672.68,343.4V360.1 M674.02,349.9V378.3 M683.35,308.4V314.3 M684.68,321.1V332.0 M690.02,297.2V315.4 M691.35,319.8V321.0 M692.68,321.0V333.0 M694.02,336.3V353.4 M695.35,341.2V347.7 M698.02,345.5V367.0 M710.02,272.1V274.1 M711.35,278.2V297.0 M712.68,296.9V304.6 M716.68,290.2V295.4 M718.02,285.0V325.1 M719.35,325.0V349.9 M724.68,314.0V340.7 M726.02,345.9V379.1 M727.35,373.7V389.8 M734.02,340.3V350.1 M736.68,352.1V361.2 M738.02,363.5V374.0 M743.35,324.0V328.4 M744.68,335.7V349.6 M746.01,339.6V356.8 M747.35,357.8V368.7 M748.68,370.3V414.4 M750.01,404.2V439.6 M751.35,449.6V460.9 M752.68,464.1V478.4 M754.01,487.0V493.5 M756.68,495.3V499.1 M758.01,514.6V521.3 M763.35,469.0V477.6 M764.68,476.9V482.1 M766.01,478.2V501.3 M767.35,488.6V496.9 M774.01,466.3V478.1 M775.35,477.5V484.1 M776.68,482.2V501.8 M778.01,488.7V513.0 M779.35,505.2V521.6 M784.68,466.7V469.3 M790.01,466.8V482.6 M791.35,470.9V472.2 M794.01,453.7V457.1 M802.01,416.6V428.4 M804.68,411.2V421.1 M807.35,427.2V432.9 M814.01,393.6V394.8 M816.68,402.3V407.5 M823.35,376.5V379.0 M824.68,380.4V384.8 M826.01,376.3V385.7 M827.35,383.7V395.6 M828.68,398.2V405.7 M835.35,330.0V333.0 M836.68,328.8V346.2 M838.01,353.4V360.9 M844.68,263.7V270.2 M846.01,275.4V291.0 M847.35,297.5V299.2 M851.35,271.8V280.5 M852.68,262.7V292.8 M854.01,286.6V308.8 M855.35,308.9V326.0 M858.01,312.8V314.7 M862.01,301.4V306.3 M863.35,290.9V308.0 M864.68,305.5V325.6 M866.01,330.6V332.3 M867.35,339.5V355.5 M878.01,265.6V269.3 M879.35,261.9V288.1 M880.68,280.0V316.5 M886.01,287.9V289.7 M887.34,291.6V294.0 M888.68,300.4V312.4 M890.01,308.1V320.0 M891.34,309.5V318.1 M896.68,282.6V284.9 M899.34,281.6V282.9 M900.68,293.2V296.1 M902.01,290.7V299.9 M903.34,292.3V297.5 M907.34,270.7V297.1 M908.68,295.1V307.5 M910.01,306.7V327.5 M911.34,327.8V343.6 M912.68,346.7V368.2 M914.01,369.4V385.0 M920.68,334.7V344.4 M922.01,336.0V346.1 M923.34,349.1V357.0 M924.68,352.2V358.6 M932.68,325.7V338.3 M934.01,328.5V336.1 M935.34,338.1V349.8 M942.01,302.1V310.3 M943.34,300.9V312.6 M950.01,293.1V312.7 M951.34,312.0V337.9 M952.68,331.6V344.8 M954.01,344.1V365.3 M955.34,363.6V379.1 M960.68,307.0V314.7 M963.34,314.1V331.6 M964.68,321.3V328.4 M968.68,288.1V295.1 M970.01,294.4V320.3 M971.34,324.5V345.9 M980.68,303.0V308.4 M982.01,298.7V302.1 M986.01,292.7V294.1 M991.34,292.3V296.3 M995.34,274.4V277.2 M996.68,283.3V296.2 M998.01,293.7V311.7 M999.34,303.4V318.4 M1000.68,322.1V336.8 M1002.01,346.0V348.3 M1003.34,350.0V354.7 M1008.68,343.1V348.6 M1010.01,351.3V357.5 M1011.34,353.3V372.7 M1016.67,350.6V355.8 M1018.01,361.0V365.1 M1019.34,369.1V377.9 M1020.67,380.1V388.3 M1022.01,379.7V392.8 M1024.67,392.0V410.8 M1026.01,415.1V421.5 M1028.67,416.5V427.6 M1030.01,429.6V430.3 M1032.67,417.8V432.6 M1043.34,387.7V403.2 M1044.67,398.0V402.9 M1048.67,358.2V366.0 M1050.01,368.3V369.5 M1051.34,364.0V377.9 M1060.67,307.4V328.0 M1062.01,316.4V341.4 M1063.34,342.2V362.0 M1064.67,360.8V376.1 M1066.01,374.6V384.0 M1067.34,391.9V402.0 M1071.34,325.4V340.8 M1072.67,340.5V391.6 M1074.01,397.0V433.0 M1075.34,433.6V449.1 M1076.67,446.1V471.0 M1078.01,465.2V472.3 M1083.34,448.2V452.4 M1084.67,458.5V463.8 M1086.01,460.6V467.9 M1091.34,402.5V403.6 M1092.67,408.5V410.0 M1094.01,426.1V428.8 M1098.01,423.3V430.3 M1099.34,425.4V434.1 M1100.67,441.1V455.7 M1102.01,464.8V465.8 M1104.67,437.8V442.6 M1106.01,451.2V461.9 M1107.34,458.9V471.1" stroke="#ec8282" stroke-width="1.5" fill="none"/>
<path d="M12.70,588.4V594.5 M14.03,577.2V594.0 M15.37,580.3V595.8 M16.70,577.8V579.6 M18.03,571.7V581.1 M19.37,571.5V572.2 M26.03,623.3V636.1 M27.37,621.0V627.6 M28.70,613.4V627.6 M30.03,601.7V616.2 M31.37,598.9V607.0 M32.70,590.5V601.1 M36.70,639.8V641.2 M39.37,626.2V649.8 M40.70,627.5V640.1 M43.37,606.6V613.7 M44.70,579.4V598.0 M46.03,591.4V601.8 M47.37,583.6V584.7 M48.70,589.4V599.8 M50.03,580.2V587.5 M51.37,572.9V577.0 M54.03,584.8V588.9 M58.03,595.0V604.4 M59.37,592.8V600.7 M62.03,571.3V580.8 M71.37,608.7V615.1 M76.70,649.2V665.0 M78.03,640.4V658.7 M79.36,631.9V642.0 M80.70,604.6V621.5 M82.03,586.3V603.2 M83.36,563.9V579.2 M84.70,560.4V564.3 M90.03,568.0V569.6 M91.36,568.8V571.3 M92.70,553.9V580.0 M94.03,548.0V558.1 M95.36,536.9V546.6 M96.70,533.2V535.5 M98.03,529.1V534.8 M103.36,548.0V554.5 M104.70,529.7V553.3 M106.03,508.2V530.6 M107.36,494.9V516.6 M112.70,505.6V520.1 M115.36,497.9V513.9 M116.70,482.8V495.8 M122.03,499.3V510.1 M123.36,494.3V496.8 M124.70,486.0V495.5 M126.03,474.2V490.2 M127.36,472.8V499.6 M134.03,491.6V504.0 M135.36,478.3V493.3 M143.36,496.8V520.4 M144.70,475.3V507.0 M146.03,461.5V469.1 M151.36,474.5V487.2 M152.70,472.9V478.0 M154.03,461.7V467.0 M155.36,459.2V462.3 M159.36,484.1V485.1 M162.03,473.4V478.6 M163.36,468.9V469.9 M170.03,456.6V486.5 M171.36,437.0V450.6 M176.70,445.1V452.2 M178.03,446.9V457.9 M180.70,436.8V440.2 M187.36,449.0V458.4 M188.70,436.3V453.3 M190.03,443.7V446.2 M195.36,474.7V485.3 M196.70,474.9V479.2 M198.03,469.9V473.4 M199.36,468.5V469.9 M203.36,561.0V563.0 M204.70,549.1V557.2 M208.70,579.5V620.4 M210.03,556.0V589.8 M211.36,537.5V550.4 M212.69,533.9V540.0 M214.03,524.3V533.4 M215.36,515.0V525.7 M220.69,538.2V558.3 M222.03,531.7V550.0 M223.36,520.4V528.2 M231.36,552.3V572.4 M232.69,528.9V550.7 M234.03,519.9V529.1 M235.36,512.7V520.5 M238.03,483.6V507.9 M239.36,481.9V485.8 M240.69,468.0V481.9 M242.03,465.5V478.0 M243.36,448.4V462.6 M244.69,447.4V452.7 M248.69,470.3V483.3 M250.03,465.4V472.7 M251.36,449.2V459.6 M254.03,451.3V456.4 M274.03,567.0V574.3 M275.36,562.7V575.0 M276.69,547.4V558.0 M278.03,543.8V548.5 M282.03,537.6V559.5 M283.36,533.6V541.5 M286.03,523.1V533.3 M287.36,522.7V533.4 M290.03,524.1V531.0 M292.69,504.4V513.6 M294.03,497.2V509.1 M295.36,488.4V495.7 M296.69,482.2V483.8 M298.03,469.8V488.1 M300.69,477.7V481.5 M302.03,457.3V490.8 M303.36,390.6V461.9 M304.69,360.3V401.6 M308.69,402.0V412.4 M314.03,440.7V448.2 M320.69,451.6V456.7 M322.03,430.2V445.3 M323.36,419.5V442.0 M324.69,409.7V412.8 M327.36,421.4V437.4 M328.69,389.2V412.7 M330.03,360.8V399.5 M331.36,354.8V367.8 M332.69,347.8V351.3 M334.03,338.8V340.3 M340.69,370.5V372.9 M342.03,350.4V370.4 M343.36,343.7V355.8 M344.69,330.7V344.5 M346.02,329.2V332.2 M350.02,349.0V352.2 M351.36,329.4V354.7 M352.69,318.7V336.4 M354.02,307.5V321.3 M355.36,291.1V312.4 M360.69,315.2V338.1 M362.02,304.0V323.3 M363.36,278.7V306.7 M370.02,353.8V354.4 M374.02,363.2V373.0 M375.36,365.9V367.7 M376.69,354.0V368.1 M383.36,368.7V373.4 M384.69,354.7V364.7 M386.02,344.0V348.6 M387.36,318.0V342.1 M388.69,305.7V329.5 M390.02,291.7V303.1 M394.02,342.5V346.2 M395.36,317.8V337.3 M396.69,304.4V319.5 M398.02,285.3V298.3 M399.36,269.4V287.3 M400.69,241.9V260.4 M406.02,292.6V295.8 M408.69,265.5V282.7 M410.02,269.7V272.8 M415.36,302.2V307.7 M416.69,298.1V306.7 M418.02,282.7V297.7 M419.36,275.5V288.7 M426.02,316.2V335.7 M427.36,310.9V319.0 M428.69,317.0V326.9 M432.69,242.3V353.2 M434.02,176.7V245.9 M438.02,168.5V177.6 M439.36,167.1V178.2 M440.69,172.8V178.4 M444.69,183.3V196.0 M446.02,169.7V179.9 M447.36,159.6V170.1 M452.69,180.3V201.3 M454.02,175.0V179.4 M462.02,208.5V219.0 M463.36,201.7V207.5 M467.36,229.6V247.8 M468.69,221.9V225.7 M472.69,236.2V248.4 M474.02,220.9V229.5 M475.36,202.2V209.6 M480.69,197.7V203.0 M482.02,186.2V199.1 M483.35,174.2V188.7 M484.69,162.8V171.5 M491.35,179.2V195.4 M492.69,184.1V190.2 M494.02,178.7V179.8 M500.69,167.8V195.8 M502.02,148.2V170.1 M507.35,165.3V181.8 M508.69,166.7V172.3 M510.02,150.8V162.7 M511.35,142.3V162.8 M516.69,170.0V186.0 M518.02,160.8V168.4 M519.35,147.8V157.2 M526.02,154.6V173.0 M527.35,144.5V157.7 M532.69,137.7V158.6 M534.02,111.4V132.9 M540.69,123.2V128.5 M542.02,116.6V119.5 M548.69,131.6V146.9 M555.35,146.4V158.8 M556.69,147.7V155.5 M558.02,149.3V156.8 M559.35,132.2V154.0 M564.69,159.8V164.5 M566.02,142.8V172.2 M568.69,206.3V221.9 M570.02,184.3V188.5 M571.35,185.0V189.0 M576.69,226.7V235.8 M578.02,203.6V221.0 M579.35,200.0V211.8 M584.69,260.5V296.5 M586.02,235.1V256.2 M587.35,202.1V238.5 M588.69,203.8V204.8 M592.69,302.9V316.9 M594.02,287.1V301.0 M595.35,280.3V288.3 M600.69,295.0V313.9 M602.02,294.1V306.9 M603.35,276.1V300.8 M604.69,287.1V291.3 M607.35,289.3V294.8 M614.02,289.2V305.2 M619.35,339.2V365.7 M622.02,341.9V347.1 M626.02,366.3V370.5 M627.35,347.6V375.0 M628.68,338.5V361.3 M630.02,345.7V347.3 M640.68,365.5V376.0 M642.02,348.2V367.1 M643.35,329.4V354.5 M648.68,372.6V389.1 M650.02,358.9V372.8 M651.35,335.2V357.8 M658.02,351.7V361.2 M659.35,342.1V355.0 M660.68,332.7V346.3 M662.02,332.4V332.9 M667.35,349.1V367.6 M668.68,338.7V351.7 M675.35,369.7V373.4 M676.68,354.3V380.9 M678.02,339.6V365.1 M679.35,323.6V340.9 M680.68,313.9V325.1 M682.02,303.0V306.7 M686.02,332.2V334.3 M687.35,312.7V338.2 M688.68,297.0V320.1 M696.68,349.2V352.6 M699.35,354.7V361.7 M700.68,350.5V358.3 M702.02,333.0V345.2 M703.35,331.7V340.6 M704.68,311.3V326.5 M706.02,284.5V319.9 M707.35,273.7V299.7 M708.68,265.3V273.0 M714.02,298.4V301.5 M715.35,291.2V307.4 M720.68,330.8V353.3 M722.02,325.8V337.0 M723.35,313.3V324.8 M728.68,369.5V381.5 M730.02,356.1V372.5 M731.35,349.7V355.2 M732.68,346.3V348.1 M735.35,351.1V354.3 M739.35,361.0V367.1 M740.68,347.2V356.7 M742.02,322.4V345.8 M755.35,502.4V505.4 M759.35,503.2V512.9 M760.68,488.2V498.3 M762.01,468.1V487.1 M768.68,485.9V504.9 M770.01,478.0V493.3 M771.35,472.6V480.2 M772.68,457.3V468.1 M780.68,504.3V516.2 M782.01,490.4V503.2 M783.35,474.9V487.9 M786.01,469.2V469.9 M787.35,470.2V476.8 M788.68,467.4V472.1 M792.68,461.2V468.0 M795.35,451.1V453.8 M796.68,448.8V453.6 M798.01,435.1V447.3 M799.35,442.5V444.8 M800.68,435.9V438.8 M803.35,403.0V436.0 M806.01,419.9V423.0 M808.68,405.4V433.7 M810.01,406.7V422.0 M811.35,401.5V418.8 M812.68,398.0V411.8 M815.35,394.7V406.5 M818.01,397.2V405.4 M819.35,391.7V397.9 M820.68,379.4V390.5 M822.01,369.4V379.7 M830.01,385.3V396.8 M831.35,366.9V388.2 M832.68,342.3V368.6 M834.01,323.7V342.6 M839.35,337.7V351.9 M840.68,302.6V340.0 M842.01,274.4V305.3 M843.35,272.3V273.2 M848.68,289.7V297.2 M850.01,284.7V291.6 M856.68,321.5V324.6 M859.35,291.0V317.2 M860.68,301.1V309.5 M868.68,327.0V355.2 M870.01,325.1V333.0 M871.35,295.7V322.6 M872.68,284.9V303.2 M874.01,279.1V283.9 M875.35,259.2V283.9 M876.68,265.4V268.5 M882.01,320.0V322.0 M883.34,307.4V316.7 M884.68,290.1V302.8 M892.68,306.8V311.9 M894.01,298.2V303.6 M895.34,283.8V296.5 M898.01,280.8V284.8 M904.68,273.5V286.7 M906.01,268.5V284.9 M915.34,378.4V381.1 M916.68,361.1V383.2 M918.01,356.3V373.9 M919.34,348.1V351.4 M926.01,349.1V351.3 M927.34,341.6V349.3 M928.68,315.9V338.7 M930.01,323.1V325.5 M931.34,322.6V331.8 M936.68,328.0V343.6 M938.01,329.5V333.8 M939.34,315.3V324.8 M940.68,295.1V316.6 M944.68,317.6V320.1 M946.01,327.0V338.6 M947.34,309.6V318.7 M948.68,306.5V311.5 M956.68,350.5V373.9 M958.01,331.7V351.0 M959.34,314.9V333.0 M962.01,315.4V326.0 M966.01,314.2V324.7 M967.34,303.7V308.6 M972.68,334.7V358.0 M974.01,314.8V339.7 M975.34,299.9V322.0 M976.68,285.3V304.7 M978.01,295.2V300.7 M979.34,295.8V300.2 M983.34,302.5V313.6 M984.68,294.6V310.1 M987.34,286.2V294.9 M988.68,279.4V281.0 M990.01,283.1V285.6 M992.68,292.6V303.4 M994.01,272.4V292.8 M1004.68,357.4V365.8 M1006.01,348.1V353.4 M1007.34,333.0V339.3 M1012.67,360.5V365.6 M1014.01,348.7V370.5 M1015.34,347.3V362.4 M1023.34,391.9V399.4 M1027.34,410.3V424.0 M1031.34,415.9V438.5 M1034.01,423.8V434.5 M1035.34,411.2V419.5 M1036.67,422.9V423.4 M1038.01,428.9V429.8 M1039.34,410.5V434.2 M1040.67,397.5V408.7 M1042.01,389.0V397.8 M1046.01,380.4V399.0 M1047.34,357.2V380.4 M1052.67,362.3V377.9 M1054.01,354.8V368.2 M1055.34,335.5V341.9 M1056.67,327.6V336.5 M1058.01,324.4V338.2 M1059.34,307.6V320.0 M1068.67,356.1V404.9 M1070.01,309.8V352.8 M1079.34,460.9V473.5 M1080.67,449.3V452.8 M1082.01,434.9V451.9 M1087.34,448.8V468.1 M1088.67,417.6V445.1 M1090.01,400.9V429.4 M1095.34,425.7V437.4 M1096.67,429.5V432.7 M1103.34,434.8V454.3" stroke="#72b472" stroke-width="1.5" fill="none"/>
<path d="M12.0,623.0C15.8,625.2 27.4,632.0 35.0,636.0C42.6,640.0 48.0,644.5 57.6,647.0C67.2,649.5 81.8,650.5 92.7,650.8C103.6,651.1 112.3,651.5 122.8,648.8C133.2,646.1 147.0,639.3 155.4,634.5C163.8,629.7 167.6,625.3 173.0,620.0C178.4,614.7 178.9,611.6 187.6,602.6C196.3,593.6 214.3,576.2 225.0,566.0C235.7,555.8 244.5,546.9 252.0,541.4C259.5,535.9 264.8,535.0 270.0,533.3C275.2,531.6 279.2,531.8 283.0,531.0C286.8,530.2 289.2,530.1 293.0,528.3C296.8,526.5 301.4,523.0 305.8,520.0C310.2,517.0 314.0,514.8 319.5,510.6C325.0,506.4 333.1,499.9 339.0,495.0C344.9,490.1 349.7,486.2 354.6,481.3C359.5,476.4 363.6,470.0 368.2,465.8C372.8,461.6 376.6,459.1 381.9,456.0C387.2,452.9 391.9,452.1 400.0,447.3C408.1,442.5 423.0,433.1 430.7,427.0C438.4,420.9 440.1,417.2 446.0,411.0C451.9,404.8 459.2,398.2 466.4,390.0C473.6,381.8 482.3,371.0 489.0,362.0C495.7,353.0 500.0,344.8 506.5,336.0C513.0,327.2 521.2,317.8 528.0,309.0C534.8,300.2 541.7,290.2 547.0,283.0C552.3,275.8 556.2,270.7 560.0,266.0C563.8,261.3 564.7,259.7 570.0,255.0C575.3,250.3 584.0,241.7 591.8,238.0C599.6,234.3 608.4,233.6 616.9,233.0C625.4,232.4 633.4,234.2 642.7,234.6C652.0,235.0 663.4,234.5 672.8,235.7C682.2,236.9 690.8,239.3 699.0,242.0C707.2,244.7 713.5,248.0 722.0,252.0C730.5,256.0 742.0,260.2 750.0,266.0C758.0,271.8 763.3,279.5 770.0,287.0C776.7,294.5 783.3,303.3 790.0,311.0C796.7,318.7 803.3,326.3 810.0,333.0C816.7,339.7 824.2,346.3 830.0,351.0C835.8,355.7 840.0,358.7 845.0,361.0C850.0,363.3 854.2,364.2 860.0,365.0C865.8,365.8 873.3,366.2 880.0,366.0C886.7,365.8 890.0,364.3 900.0,363.5C910.0,362.7 925.0,361.8 940.0,361.0C955.0,360.2 976.7,360.2 990.0,358.5C1003.3,356.8 1010.0,353.4 1020.0,351.0C1030.0,348.6 1042.3,346.2 1049.8,344.0C1057.3,341.8 1060.8,338.5 1065.0,337.5C1069.2,336.5 1070.9,337.5 1075.0,338.0C1079.1,338.5 1084.4,339.4 1089.6,340.5C1094.8,341.6 1103.3,343.8 1106.0,344.5L1222,344.5" fill="none" stroke="#0e7a0e" stroke-width="2.2" stroke-linejoin="round"/>
<path d="M49.0,690.0C55.9,682.2 79.7,658.0 90.5,643.0C101.3,628.0 109.2,608.7 114.0,600.0C118.8,591.3 113.0,596.9 119.0,591.0C125.0,585.1 141.5,572.6 150.0,564.5C158.5,556.4 164.4,549.0 170.0,542.5C175.6,536.0 178.6,531.0 183.6,525.4C188.6,519.8 193.9,513.3 200.0,508.7C206.1,504.1 213.4,499.9 220.0,497.6C226.6,495.3 234.4,495.7 239.4,494.8C244.4,493.9 246.2,493.0 250.0,492.0C253.8,491.0 257.8,488.7 262.0,489.0C266.2,489.3 270.3,492.2 275.0,494.0C279.7,495.8 285.3,498.9 290.0,500.0C294.7,501.1 298.8,500.8 303.0,500.7C307.2,500.6 312.2,499.5 315.0,499.3C317.8,499.1 317.2,499.7 319.5,499.3C321.8,498.9 325.8,499.3 329.0,497.0C332.2,494.7 335.7,490.0 339.0,485.3C342.3,480.6 345.4,473.9 348.7,468.7C351.9,463.5 355.2,459.0 358.5,454.0C361.8,449.0 364.9,442.6 368.2,438.5C371.4,434.4 374.8,432.5 378.0,429.7C381.2,426.9 384.0,426.3 387.7,421.9C391.4,417.5 395.2,411.5 400.0,403.4C404.8,395.3 411.7,381.0 416.2,373.3C420.7,365.6 423.2,363.3 427.1,357.0C431.0,350.7 436.2,342.2 439.8,335.3C443.4,328.4 445.5,321.4 448.8,315.4C452.1,309.3 454.3,305.6 459.7,299.0C465.1,292.4 474.4,284.6 481.4,275.7C488.4,266.8 493.1,257.3 501.5,245.6C509.9,233.9 523.2,215.9 531.6,205.5C540.0,195.1 545.9,188.6 551.7,183.0C557.6,177.4 561.7,173.4 566.7,172.0C571.7,170.6 575.9,172.6 581.7,174.4C587.6,176.2 594.3,177.8 601.8,183.0C609.3,188.2 618.8,195.9 626.9,205.5C635.0,215.1 642.6,229.5 650.3,240.3C657.9,251.1 665.9,260.3 672.8,270.3C679.7,280.3 685.3,292.2 691.6,300.4C697.9,308.5 704.8,314.7 710.4,319.2C716.0,323.7 719.2,323.7 725.5,327.5C731.8,331.3 740.5,336.3 748.0,341.8C755.5,347.3 763.1,354.3 770.6,360.6C778.1,366.9 785.7,373.8 793.2,379.4C800.7,385.0 808.4,390.1 815.7,394.4C823.0,398.7 831.3,402.8 837.0,405.0C842.7,407.2 846.0,407.5 850.0,407.6C854.0,407.7 857.6,406.8 860.9,405.7C864.2,404.6 866.2,402.9 870.0,401.0C873.8,399.1 879.2,398.0 883.4,394.4C887.6,390.8 891.0,385.1 895.0,379.5C899.0,373.9 903.1,366.9 907.6,360.7C912.1,354.4 917.0,347.2 922.2,342.0C927.4,336.8 933.1,333.1 939.0,329.4C944.9,325.7 952.9,322.4 957.7,320.0C962.5,317.6 961.0,316.1 968.0,315.2C975.0,314.2 991.5,313.3 999.5,314.3C1007.5,315.3 1011.4,318.7 1016.2,321.0C1021.0,323.3 1023.8,324.8 1028.4,328.3C1033.0,331.8 1039.1,339.4 1043.7,342.0C1048.3,344.6 1051.5,343.0 1056.0,343.6C1060.5,344.2 1066.4,343.4 1071.0,345.7C1075.6,348.0 1077.7,352.6 1083.5,357.3C1089.3,362.0 1102.2,371.1 1106.0,373.8L1222,373.8" fill="none" stroke="#0a0ad0" stroke-width="2.3" stroke-linejoin="round"/>
<text x="1118" y="341.3" font-size="9.6" fill="#3c9a3c">H1 MA:200:0:0: 0.65935</text>
<rect x="1161" y="335.0" width="61" height="7.8" fill="#ffffff"/>
<text x="1221" y="341" font-size="9.6" fill="#333" text-anchor="end">38.2- 0.65948</text>
<text x="1221" y="371.3" font-size="9.6" fill="#4a4ae0" text-anchor="end">H1 MA:100:0:0: 0.65820</text>
<text x="1221" y="426" font-size="9.6" fill="#333" text-anchor="end">50.0 -0.65603</text>
<text x="1221" y="497.5" font-size="9.6" fill="#4a4ae0" text-anchor="end">D1 MA:100:0:0: 0.65314</text>
<text x="1221" y="511.5" font-size="9.6" fill="#333" text-anchor="end">61.8 -0.65257</text>
<text x="1221" y="62.5" font-size="9.6" fill="#333" text-anchor="end">0.0-0.67066</text>
<circle cx="189.6" cy="492.6" r="9.6" fill="#e20e0e"/>
<text x="189.6" y="497.6" font-size="14" fill="#fff" stroke="#fff" stroke-width="0.3" text-anchor="middle">1</text>
<circle cx="201.6" cy="460.9" r="9.6" fill="#e20e0e"/>
<text x="201.6" y="465.9" font-size="14" fill="#fff" stroke="#fff" stroke-width="0.3" text-anchor="middle">2</text>
<circle cx="249.4" cy="491" r="9.6" fill="#e20e0e"/>
<text x="249.4" y="496.0" font-size="14" fill="#fff" stroke="#fff" stroke-width="0.3" text-anchor="middle">3</text>
<circle cx="303.4" cy="487.2" r="9.6" fill="#e20e0e"/>
<text x="303.4" y="492.2" font-size="14" fill="#fff" stroke="#fff" stroke-width="0.3" text-anchor="middle">4</text>
<circle cx="320.7" cy="478.4" r="9.6" fill="#e20e0e"/>
<text x="320.7" y="483.4" font-size="14" fill="#fff" stroke="#fff" stroke-width="0.3" text-anchor="middle">5</text>
<circle cx="748" cy="479.5" r="9.6" fill="#e20e0e"/>
<text x="748" y="484.5" font-size="14" fill="#fff" stroke="#fff" stroke-width="0.3" text-anchor="middle">6</text>
<circle cx="775.4" cy="460.7" r="9.6" fill="#e20e0e"/>
<text x="775.4" y="465.7" font-size="14" fill="#fff" stroke="#fff" stroke-width="0.3" text-anchor="middle">7</text>
<circle cx="793.4" cy="479.5" r="9.6" fill="#e20e0e"/>
<text x="793.4" y="484.5" font-size="14" fill="#fff" stroke="#fff" stroke-width="0.3" text-anchor="middle">8</text>
<circle cx="1079.8" cy="490.5" r="9.6" fill="#e20e0e"/>
<text x="1079.8" y="495.5" font-size="14" fill="#fff" stroke="#fff" stroke-width="0.3" text-anchor="middle">9</text>
<circle cx="1095.7" cy="477.3" r="9.6" fill="#e20e0e"/>
<text x="1095.7" y="482.3" font-size="12" fill="#fff" stroke="#fff" stroke-width="0.3" text-anchor="middle">10</text>
<path d="M1177.3,546.5L1108.3,470M1112.3,482.4L1108.3,470M1120.2,475.3L1108.3,470M1158.9,546.5L1104,484M1107.9,496.4L1104,484M1115.8,489.4L1104,484M1145.9,546.5L1102.2,499M1106.3,511.3L1102.2,499M1114.1,504.1L1102.2,499M1134.4,546.5L1106,514M1109.8,526.4L1106,514M1117.8,519.5L1106,514" stroke="#dd0f0f" stroke-width="3.5" fill="none" stroke-linecap="butt"/>
<rect x="1013.5" y="547.5" width="202" height="127" fill="#ffffff" stroke="#cc1515" stroke-width="3"/>
<text x="1019.4" y="570.6" font-size="13.3" font-weight="bold" fill="#0a0a0a" stroke="#0a0a0a" stroke-width="0.35" textLength="190.1" lengthAdjust="spacing">The AUDUSD is testing the</text>
<text x="1023.3" y="588.7" font-size="13.3" font-weight="bold" fill="#0a0a0a" stroke="#0a0a0a" stroke-width="0.35" textLength="180.8" lengthAdjust="spacing">low from yesterday and a</text>
<text x="1039.5" y="606.8" font-size="13.3" font-weight="bold" fill="#0a0a0a" stroke="#0a0a0a" stroke-width="0.35" textLength="148.0" lengthAdjust="spacing">key swing area. Just</text>
<text x="1027.6" y="624.9" font-size="13.3" font-weight="bold" fill="#0a0a0a" stroke="#0a0a0a" stroke-width="0.35" textLength="172.8" lengthAdjust="spacing">below is the 100 day MA</text>
<text x="1022.7" y="643.0" font-size="13.3" font-weight="bold" fill="#0a0a0a" stroke="#0a0a0a" stroke-width="0.35" textLength="181.4" lengthAdjust="spacing">and the 61.8% increasing</text>
<text x="1034.6" y="661.1" font-size="13.3" font-weight="bold" fill="#0a0a0a" stroke="#0a0a0a" stroke-width="0.35" textLength="158.3" lengthAdjust="spacing">the areas importance.</text>
<path d="M13.8,38 L21.2,38 L17.5,42 Z" fill="#000"/>
<text x="26" y="43.8" font-size="9.8" fill="#1e1e1e" textLength="48.8" lengthAdjust="spacingAndGlyphs">AUDUSD,H1</text>
<text x="80.9" y="43.8" font-size="9.8" fill="#1e1e1e" textLength="33.8" lengthAdjust="spacingAndGlyphs">0.65459</text>
<text x="118.9" y="43.8" font-size="9.8" fill="#1e1e1e" textLength="33.0" lengthAdjust="spacingAndGlyphs">0.65500</text>
<text x="156.2" y="43.8" font-size="9.8" fill="#1e1e1e" textLength="33.3" lengthAdjust="spacingAndGlyphs">0.65427</text>
<text x="193.2" y="43.8" font-size="9.8" fill="#1e1e1e" textLength="33.8" lengthAdjust="spacingAndGlyphs">0.65459</text>
</g>
<rect x="11.5" y="32.5" width="1211.0" height="657.0" fill="none" stroke="#606060" stroke-width="1"/>
<line x1="1222.5" y1="57.6" x2="1225.0" y2="57.6" stroke="#333" stroke-width="1"/>
<text x="1226.8" y="61.0" font-size="9.4" fill="#2b2b2b">0.67095</text>
<line x1="1222.5" y1="101.1" x2="1225.0" y2="101.1" stroke="#333" stroke-width="1"/>
<text x="1226.8" y="104.5" font-size="9.4" fill="#2b2b2b">0.66920</text>
<line x1="1222.5" y1="144.6" x2="1225.0" y2="144.6" stroke="#333" stroke-width="1"/>
<text x="1226.8" y="148.0" font-size="9.4" fill="#2b2b2b">0.66745</text>
<line x1="1222.5" y1="188.1" x2="1225.0" y2="188.1" stroke="#333" stroke-width="1"/>
<text x="1226.8" y="191.5" font-size="9.4" fill="#2b2b2b">0.66570</text>
<line x1="1222.5" y1="231.6" x2="1225.0" y2="231.6" stroke="#333" stroke-width="1"/>
<text x="1226.8" y="235.0" font-size="9.4" fill="#2b2b2b">0.66395</text>
<line x1="1222.5" y1="275.1" x2="1225.0" y2="275.1" stroke="#333" stroke-width="1"/>
<text x="1226.8" y="278.5" font-size="9.4" fill="#2b2b2b">0.66220</text>
<line x1="1222.5" y1="318.6" x2="1225.0" y2="318.6" stroke="#333" stroke-width="1"/>
<text x="1226.8" y="322.0" font-size="9.4" fill="#2b2b2b">0.66045</text>
<line x1="1222.5" y1="362.0" x2="1225.0" y2="362.0" stroke="#333" stroke-width="1"/>
<text x="1226.8" y="365.4" font-size="9.4" fill="#2b2b2b">0.65870</text>
<line x1="1222.5" y1="405.5" x2="1225.0" y2="405.5" stroke="#333" stroke-width="1"/>
<text x="1226.8" y="408.9" font-size="9.4" fill="#2b2b2b">0.65695</text>
<line x1="1222.5" y1="449.0" x2="1225.0" y2="449.0" stroke="#333" stroke-width="1"/>
<text x="1226.8" y="452.4" font-size="9.4" fill="#2b2b2b">0.65520</text>
<line x1="1222.5" y1="492.5" x2="1225.0" y2="492.5" stroke="#333" stroke-width="1"/>
<text x="1226.8" y="495.9" font-size="9.4" fill="#2b2b2b">0.65345</text>
<line x1="1222.5" y1="536.0" x2="1225.0" y2="536.0" stroke="#333" stroke-width="1"/>
<text x="1226.8" y="539.4" font-size="9.4" fill="#2b2b2b">0.65170</text>
<line x1="1222.5" y1="579.5" x2="1225.0" y2="579.5" stroke="#333" stroke-width="1"/>
<text x="1226.8" y="582.9" font-size="9.4" fill="#2b2b2b">0.64995</text>
<line x1="1222.5" y1="623.0" x2="1225.0" y2="623.0" stroke="#333" stroke-width="1"/>
<text x="1226.8" y="626.4" font-size="9.4" fill="#2b2b2b">0.64820</text>
<line x1="1222.5" y1="666.5" x2="1225.0" y2="666.5" stroke="#333" stroke-width="1"/>
<text x="1226.8" y="669.9" font-size="9.4" fill="#2b2b2b">0.64645</text>
<rect x="1223" y="458.7" width="41.5" height="11" fill="#000"/>
<text x="1226.8" y="467.6" font-size="9.4" fill="#fff">0.65459</text>
<rect x="1223" y="238.0" width="41.5" height="10.8" fill="#ee0000"/>
<text x="1226.8" y="246.9" font-size="9.6" fill="#fff">0.66351</text>
<rect x="1223" y="263.9" width="41.5" height="10.8" fill="#ee0000"/>
<text x="1226.8" y="272.8" font-size="9.6" fill="#fff">0.66247</text>
<rect x="1223" y="329.5" width="41.5" height="10.8" fill="#ee0000"/>
<text x="1226.8" y="338.4" font-size="9.6" fill="#fff">0.65983</text>
<rect x="1223" y="352.8" width="41.5" height="10.8" fill="#ee0000"/>
<text x="1226.8" y="361.7" font-size="9.6" fill="#fff">0.65889</text>
<rect x="1223" y="391.1" width="41.5" height="10.8" fill="#ee0000"/>
<text x="1226.8" y="400.0" font-size="9.6" fill="#fff">0.65735</text>
<rect x="1223" y="406.5" width="41.5" height="10.8" fill="#ee0000"/>
<text x="1226.8" y="415.4" font-size="9.6" fill="#fff">0.65673</text>
<rect x="1223" y="427.1" width="41.5" height="10.8" fill="#ee0000"/>
<text x="1226.8" y="436.0" font-size="9.6" fill="#fff">0.65590</text>
<rect x="1223" y="463.7" width="41.5" height="10.8" fill="#ee0000"/>
<text x="1226.8" y="472.6" font-size="9.6" fill="#fff">0.65443</text>
<rect x="1223" y="477.1" width="41.5" height="10.8" fill="#ee0000"/>
<text x="1226.8" y="486.0" font-size="9.6" fill="#fff">0.65389</text>
<rect x="1223" y="562.3" width="41.5" height="10.8" fill="#ee0000"/>
<text x="1226.8" y="571.2" font-size="9.6" fill="#fff">0.65046</text>
<rect x="1223" y="620.7" width="41.5" height="10.8" fill="#ee0000"/>
<text x="1226.8" y="629.6" font-size="9.6" fill="#fff">0.64811</text>
<line x1="11.8" y1="689.5" x2="11.8" y2="692.5" stroke="#333" stroke-width="1"/>
<text x="11.8" y="702" font-size="10.3" fill="#262626" textLength="52.4" lengthAdjust="spacingAndGlyphs">25 Aug 2025</text>
<line x1="97.1" y1="689.5" x2="97.1" y2="692.5" stroke="#333" stroke-width="1"/>
<text x="97.1" y="702" font-size="10.3" fill="#262626" textLength="54.9" lengthAdjust="spacingAndGlyphs">28 Aug 04:00</text>
<line x1="182.4" y1="689.5" x2="182.4" y2="692.5" stroke="#333" stroke-width="1"/>
<text x="182.4" y="702" font-size="10.3" fill="#262626" textLength="50.3" lengthAdjust="spacingAndGlyphs">1 Sep 20:00</text>
<line x1="267.7" y1="689.5" x2="267.7" y2="692.5" stroke="#333" stroke-width="1"/>
<text x="267.7" y="702" font-size="10.3" fill="#262626" textLength="50.3" lengthAdjust="spacingAndGlyphs">4 Sep 12:00</text>
<line x1="353.0" y1="689.5" x2="353.0" y2="692.5" stroke="#333" stroke-width="1"/>
<text x="353.0" y="702" font-size="10.3" fill="#262626" textLength="50.3" lengthAdjust="spacingAndGlyphs">9 Sep 04:00</text>
<line x1="438.3" y1="689.5" x2="438.3" y2="692.5" stroke="#333" stroke-width="1"/>
<text x="438.3" y="702" font-size="10.3" fill="#262626" textLength="54.8" lengthAdjust="spacingAndGlyphs">11 Sep 20:00</text>
<line x1="523.6" y1="689.5" x2="523.6" y2="692.5" stroke="#333" stroke-width="1"/>
<text x="523.6" y="702" font-size="10.3" fill="#262626" textLength="55.5" lengthAdjust="spacingAndGlyphs">16 Sep 12:00</text>
<line x1="608.9" y1="689.5" x2="608.9" y2="692.5" stroke="#333" stroke-width="1"/>
<text x="608.9" y="702" font-size="10.3" fill="#262626" textLength="55.5" lengthAdjust="spacingAndGlyphs">19 Sep 04:00</text>
<line x1="694.2" y1="689.5" x2="694.2" y2="692.5" stroke="#333" stroke-width="1"/>
<text x="694.2" y="702" font-size="10.3" fill="#262626" textLength="55.5" lengthAdjust="spacingAndGlyphs">23 Sep 20:00</text>
<line x1="779.5" y1="689.5" x2="779.5" y2="692.5" stroke="#333" stroke-width="1"/>
<text x="779.5" y="702" font-size="10.3" fill="#262626" textLength="55.5" lengthAdjust="spacingAndGlyphs">26 Sep 12:00</text>
<line x1="864.8" y1="689.5" x2="864.8" y2="692.5" stroke="#333" stroke-width="1"/>
<text x="864.8" y="702" font-size="10.3" fill="#262626" textLength="48.2" lengthAdjust="spacingAndGlyphs">1 Oct 04:00</text>
<line x1="950.1" y1="689.5" x2="950.1" y2="692.5" stroke="#333" stroke-width="1"/>
<text x="950.1" y="702" font-size="10.3" fill="#262626" textLength="48.2" lengthAdjust="spacingAndGlyphs">3 Oct 20:00</text>
<line x1="1035.4" y1="689.5" x2="1035.4" y2="692.5" stroke="#333" stroke-width="1"/>
<text x="1035.4" y="702" font-size="10.3" fill="#262626" textLength="48.2" lengthAdjust="spacingAndGlyphs">8 Oct 12:00</text>
</svg></body></html>
